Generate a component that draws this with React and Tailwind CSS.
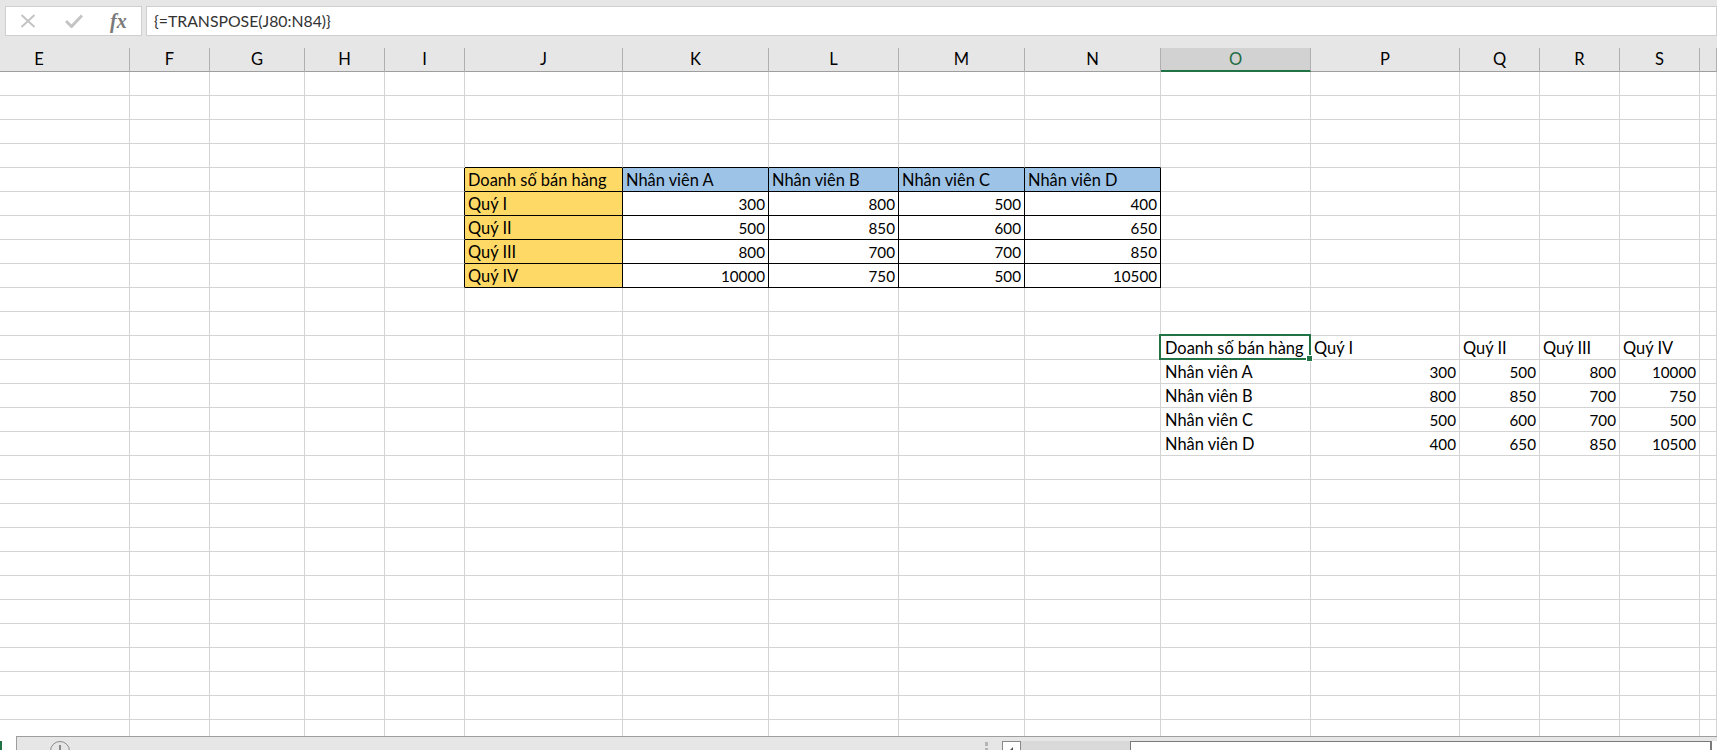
const COLS = [
  ["E", "w-[130px]"], ["F", "w-[80px]"], ["G", "w-[95px]"], ["H", "w-[80px]"], ["I", "w-[80px]"],
  ["J", "w-[158px]"], ["K", "w-[146px]"], ["L", "w-[130px]"], ["M", "w-[126px]"], ["N", "w-[136px]"],
  ["O", "w-[150px]"], ["P", "w-[149px]"], ["Q", "w-[80px]"], ["R", "w-[80px]"], ["S", "w-[80px]"], ["T", "w-[17px]"],
];

const CELLS = {
  "4:J": "Doanh số bán hàng", "4:K": "Nhân viên A", "4:L": "Nhân viên B", "4:M": "Nhân viên C", "4:N": "Nhân viên D",
  "5:J": "Quý I", "5:K": 300, "5:L": 800, "5:M": 500, "5:N": 400,
  "6:J": "Quý II", "6:K": 500, "6:L": 850, "6:M": 600, "6:N": 650,
  "7:J": "Quý III", "7:K": 800, "7:L": 700, "7:M": 700, "7:N": 850,
  "8:J": "Quý IV", "8:K": 10000, "8:L": 750, "8:M": 500, "8:N": 10500,
  "11:O": "Doanh số bán hàng", "11:P": "Quý I", "11:Q": "Quý II", "11:R": "Quý III", "11:S": "Quý IV",
  "12:O": "Nhân viên A", "12:P": 300, "12:Q": 500, "12:R": 800, "12:S": 10000,
  "13:O": "Nhân viên B", "13:P": 800, "13:Q": 850, "13:R": 700, "13:S": 750,
  "14:O": "Nhân viên C", "14:P": 500, "14:Q": 600, "14:R": 700, "14:S": 500,
  "15:O": "Nhân viên D", "15:P": 400, "15:Q": 650, "15:R": 850, "15:S": 10500,
};

const TABLE_COLS = ["J", "K", "L", "M", "N"];

function Cell({ row, col, width }) {
  const value = CELLS[`${row}:${col}`];
  const inTable = row >= 4 && row <= 8 && TABLE_COLS.includes(col);
  const rightBlack = (row >= 4 && row <= 8) && (col === "I" || TABLE_COLS.includes(col));
  const bottomBlack = (row >= 3 && row <= 8) && TABLE_COLS.includes(col);
  const yellow = inTable && col === "J";
  const blue = row === 4 && inTable && col !== "J";
  const selected = row === 11 && col === "O";
  return (
    <div
      className={[
        "relative flex-none h-[24px] border-r border-b leading-[24px] whitespace-nowrap text-black",
        width,
        selected ? "z-10" : "",
        rightBlack ? "border-r-black" : "border-r-[#d4d4d4]",
        bottomBlack ? "border-b-black" : "border-b-[#d4d4d4]",
        yellow ? "bg-[#ffd966]" : blue ? "bg-[#9dc3e6]" : "bg-white",
        typeof value === "number" ? "text-right pr-[3px] text-[15.2px]" : "text-left text-[16.4px]",
        typeof value === "string" ? (col === "O" ? "pl-[4px]" : "pl-[3px]") : "",
      ].join(" ")}
    >
      {value}
      {selected && (
        <span className="absolute left-[-2px] top-[-2px] w-[152px] h-[26px] border-2 border-[#217346]">
          <span className="absolute right-[-4px] bottom-[-4px] w-[5px] h-[5px] bg-[#217346] border border-white box-content" />
        </span>
      )}
    </div>
  );
}

export default function App() {
  const rows = Array.from({ length: 28 }, (_, i) => i);
  return (
    <div className="flex flex-col w-[1717px] h-[750px] overflow-hidden bg-[#e6e6e6] font-['Lato','Liberation_Sans',sans-serif] text-[15px]">
      {/* Formula bar */}
      <div className="flex-none h-[48px] flex items-start pt-[6px] pl-[5px] gap-[4px]">
        <div className="flex-none w-[137px] h-[30px] bg-white border border-[#cfcfcf] relative flex items-center">
          <svg width="16" height="14" viewBox="0 0 16 14" className="ml-[14px]">
            <path d="M1.5 1 L14.5 13 M14.5 1 L1.5 13" stroke="#c4c4c4" strokeWidth="2" fill="none" />
          </svg>
          <svg width="18" height="14" viewBox="0 0 18 14" className="ml-[29px]">
            <path d="M1 7 L6.5 12.5 L17 1.5" stroke="#c4c4c4" strokeWidth="3" fill="none" />
          </svg>
          <span className="ml-[27px] font-['Liberation_Serif',serif] italic font-bold text-[20px] leading-none text-[#7a7a7a]">
            fx
          </span>
        </div>
        <div className="flex-1 h-[30px] bg-white border border-[#cfcfcf] pl-[7px] leading-[27px] text-[15.8px] text-[#333333] whitespace-nowrap">
          {"{=TRANSPOSE(J80:N84)}"}
        </div>
      </div>

      {/* Column headers */}
      <div className="flex-none flex h-[24px]">
        {COLS.map(([name, w]) => (
          <div
            key={name}
            className={[
              "flex-none h-[24px] border-b text-center leading-[23px] text-[16.5px]",
              w,
              name === "E" ? "pr-[51px]" : "",
              name === "O"
                ? "bg-[#d2d2d2] border-b-2 border-b-[#217346] border-r border-r-[#b0b0b0] text-[#1f6b43]"
                : "border-b-[#9e9e9e] border-r border-r-[#b0b0b0] text-black",
            ].join(" ")}
          >
            {name === "T" ? "" : name}
          </div>
        ))}
      </div>

      {/* Sheet */}
      <div className="flex-1 min-h-0 overflow-hidden bg-white">
        {rows.map((row) => (
          <div key={row} className="flex h-[24px]">
            {COLS.map(([name, w]) => (
              <Cell key={name} row={row} col={name} width={w} />
            ))}
          </div>
        ))}
      </div>

      {/* Bottom strip */}
      <div className="flex-none h-[14px] flex bg-white">
        <div className="flex-none w-[16px] relative">
          <div className="absolute left-0 top-[5px] w-[2px] h-[9px] bg-[#217346]" />
        </div>
        <div className="flex-1 flex h-[14px] overflow-hidden border-t border-l border-[#9e9e9e] bg-[#e6e6e6] pt-[4px]">
          <div className="flex-none ml-[33px] w-[20px] h-[20px] rounded-full border border-[#8a8a8a] relative">
            <span className="absolute left-[8px] top-[3px] w-[2px] h-[12px] bg-[#8a8a8a]" />
          </div>
          <div className="flex-none ml-[915px] w-[3px] pt-[1px]">
            <div className="w-[3px] h-[4px] bg-[#b5b5b5]" />
            <div className="w-[3px] h-[4px] mt-[2px] bg-[#b5b5b5]" />
          </div>
          <div className="flex-none ml-[14px] w-[19px] h-[14px] bg-white border border-[#8a8a8a] relative">
            <span className="absolute left-[6px] top-[5px] w-0 h-0 border-t-[4px] border-t-transparent border-r-[4px] border-r-[#555555] border-b-[4px] border-b-transparent" />
          </div>
          <div className="flex-none w-[109px] h-[14px] bg-[#d9d9d9]" />
          <div className="flex-none w-[581px] h-[14px] bg-white border border-[#7a7a7a]" />
          <div className="flex-1 h-[14px] bg-white border-l border-[#7a7a7a]" />
        </div>
      </div>
    </div>
  );
}
